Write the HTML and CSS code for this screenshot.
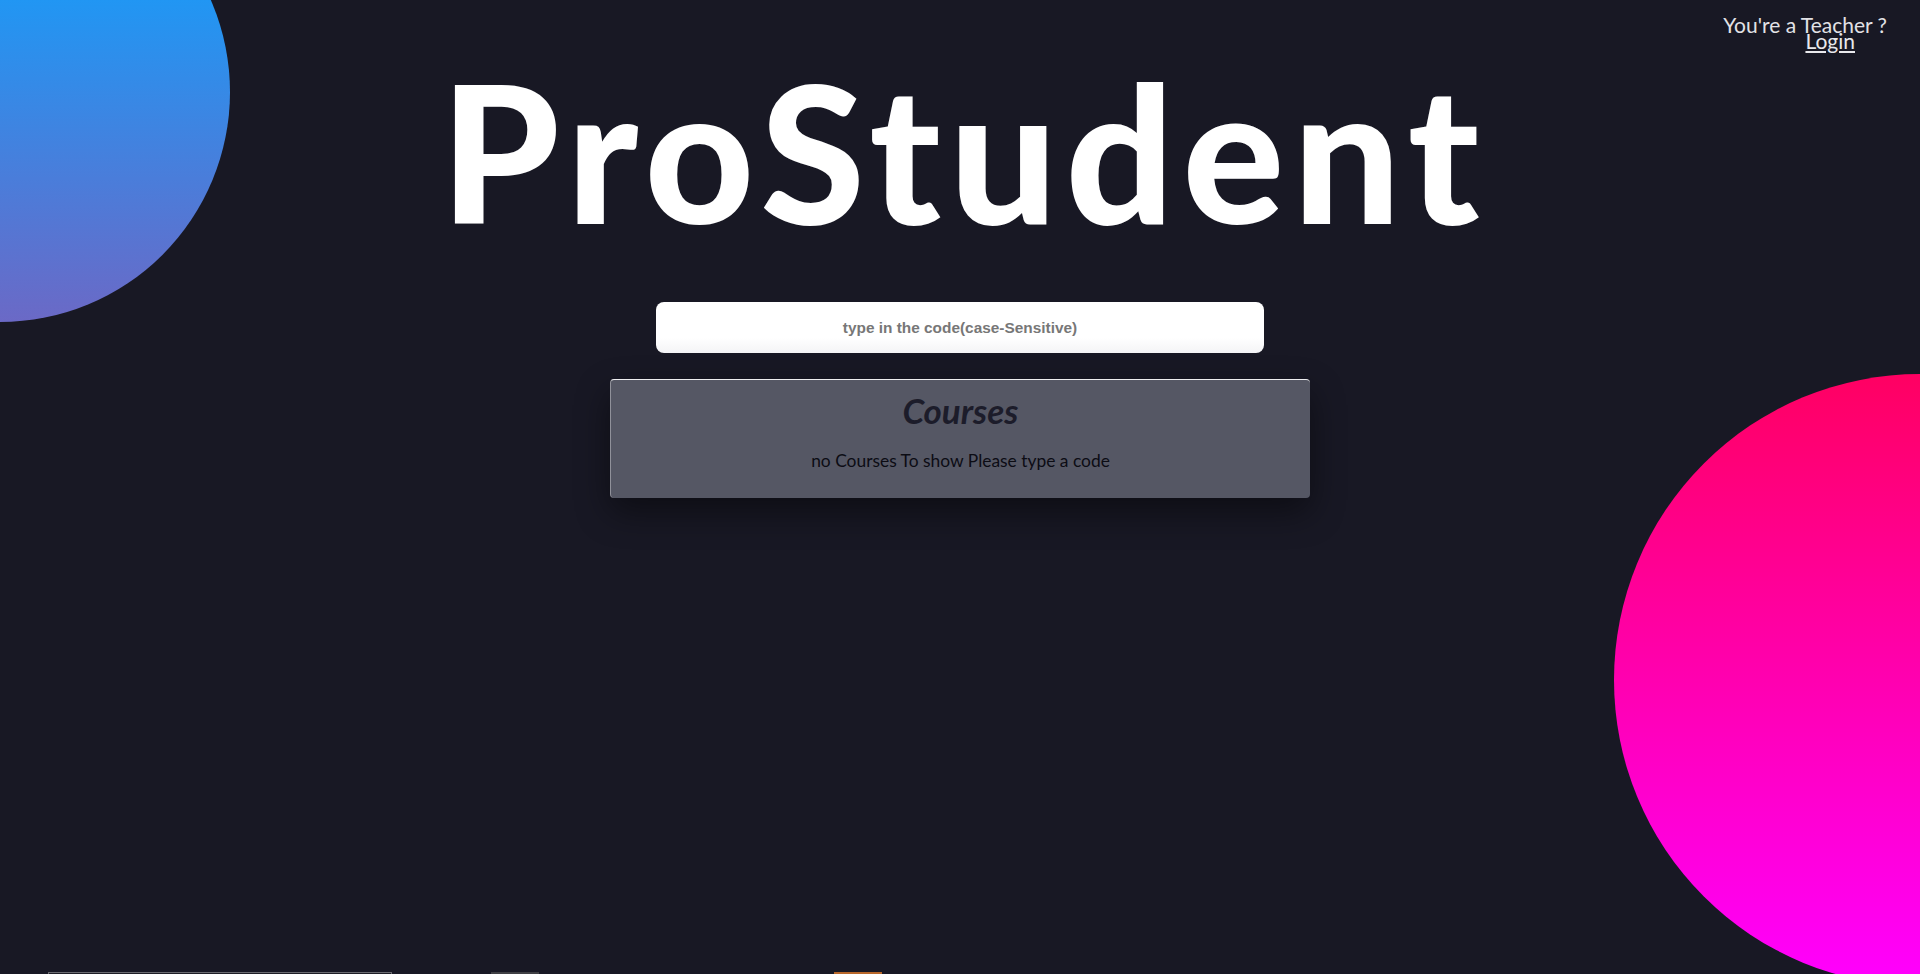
FILE: index.html
```html
<!DOCTYPE html>
<html lang="en">
<head>
<meta charset="utf-8">
<title>ProStudent</title>
<link rel="stylesheet" href="styles.css">
</head>
<body>
<div class="blob blob-blue"></div>
<div class="blob blob-pink"></div>
<div class="page">
  <header class="topbar">
    <div class="teacher">
      <span class="teacher-q">You're a Teacher ?</span>
      <a href="#" class="login">Login</a>
    </div>
  </header>
  <main class="hero">
    <h1 class="brand">ProStudent</h1>
    <input class="code-input" type="text" placeholder="type in the code(case-Sensitive)">
    <section class="courses">
      <h2 class="courses-title">Courses</h2>
      <p class="courses-empty">no Courses To show Please type a code</p>
    </section>
  </main>
</div>
<footer class="strip">
  <div class="strip-box"></div>
  <div class="strip-gray"></div>
  <div class="strip-orange"></div>
</footer>
</body>
</html>
```

FILE: styles.css
```css
* { box-sizing: border-box; }
html, body {
  margin: 0;
  padding: 0;
}
body {
  background: #181824;
  font-family: "Lato", "Open Sans", sans-serif;
  color: #ffffff;
  overflow-x: hidden;
  position: relative;
}
.blob {
  position: absolute;
  border-radius: 50%;
  z-index: 0;
}
.blob-blue {
  width: 460px;
  height: 460px;
  left: -230px;
  top: -138px;
  background: linear-gradient(to bottom, #0ea3ff 0%, #2196f3 30%, #6b69c6 100%);
}
.blob-pink {
  width: 612px;
  height: 612px;
  left: 1614px;
  top: 374px;
  background: linear-gradient(to bottom, #ff0062 0%, #ff00b0 50%, #ff00ff 100%);
}
.page {
  position: relative;
  z-index: 1;
  min-height: 972px;
  display: flex;
  flex-direction: column;
}
.topbar {
  display: flex;
  justify-content: flex-end;
  padding: 17px 33px 0 0;
  height: 0;
  overflow: visible;
}
.teacher {
  display: flex;
  flex-direction: column;
  align-items: flex-end;
  font-size: 21px;
  line-height: 16px;
  color: #e2e2e6;
}
.teacher-q {
  display: block;
}
.login {
  display: block;
  color: #e8e8ec;
  text-decoration: underline;
  margin-right: 32px;
  line-height: 16px;
}
.hero {
  display: flex;
  flex-direction: column;
  align-items: center;
  padding-top: 28px;
}
.brand {
  margin: 0;
  padding-left: 8.5px;
  font-size: 190px;
  line-height: 210px;
  font-weight: 900;
  letter-spacing: 8.5px;
  color: #ffffff;
}
.code-input {
  margin-top: 47px;
  width: 608px;
  height: 51px;
  border: none;
  border-radius: 8px;
  background: linear-gradient(to bottom, #ffffff 70%, #f4f4f6 100%);
  text-align: center;
  font-family: "Liberation Sans", Arial, sans-serif;
  font-weight: 700;
  font-size: 15.4px;
  color: #333;
  outline: none;
}
.code-input::placeholder {
  color: #777777;
  opacity: 1;
}
.courses {
  margin-top: 26px;
  width: 700px;
  background: #555764;
  border-radius: 4px;
  border-top: 1px solid rgba(255,255,255,0.9);
  border-left: 1px solid rgba(255,255,255,0.35);
  box-shadow: 0 14px 34px rgba(0,0,0,0.45);
  text-align: center;
  padding: 9px 0 27px;
}
.courses-title {
  margin: 0;
  font-size: 35px;
  line-height: 42px;
  font-weight: 700;
  font-style: italic;
  color: #1c1c2a;
}
.courses-empty {
  margin: 19px 0 0;
  font-size: 17.4px;
  line-height: 21px;
  color: #0c0c14;
}
.strip {
  position: relative;
  z-index: 1;
  display: flex;
  align-items: flex-start;
  height: 40px;
  padding-left: 48px;
}
.strip-box {
  width: 344px;
  height: 40px;
  border: 1px solid #6a6a70;
  background: #1e1e26;
}
.strip-gray {
  margin-left: 99px;
  width: 48px;
  height: 40px;
  background: #3f3f44;
}
.strip-orange {
  margin-left: 295px;
  width: 48px;
  height: 40px;
  background: #b8672a;
}
```
